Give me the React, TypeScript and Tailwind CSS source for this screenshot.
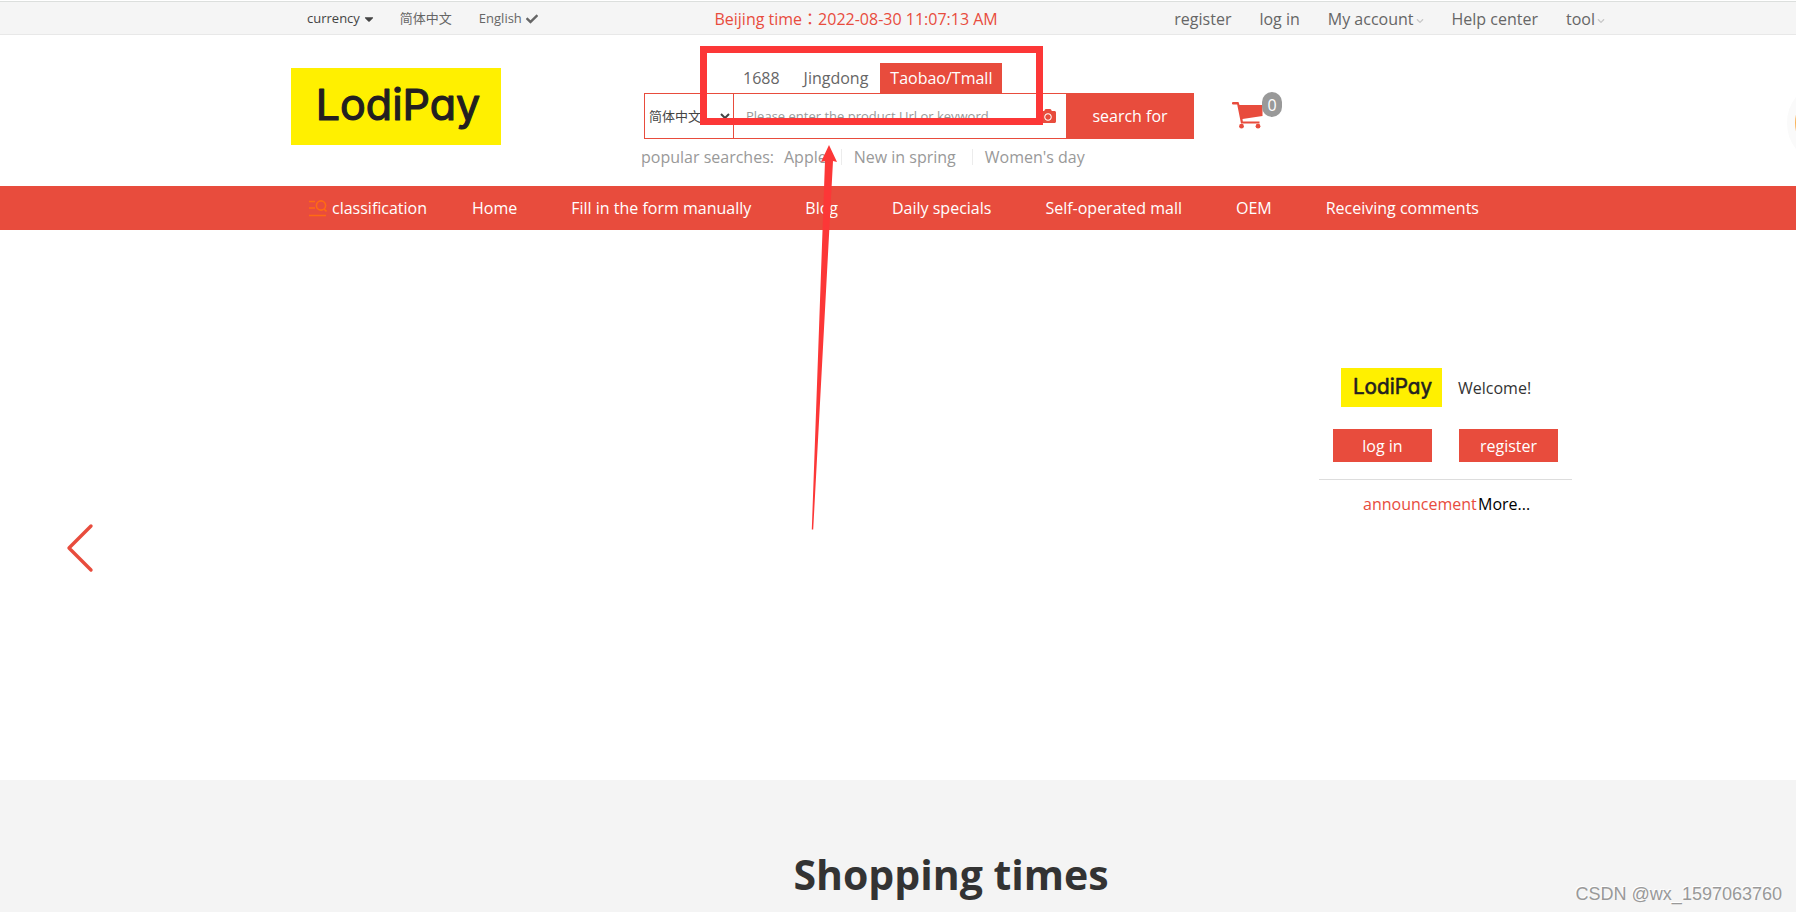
import { FaCamera, FaCaretDown, FaCheck, FaChevronDown } from 'react-icons/fa';

const accountLinks = [
  { label: 'register' },
  { label: 'log in' },
  { label: 'My account', menu: true },
  { label: 'Help center' },
  { label: 'tool', menu: true },
];

const navLinks = [
  'Home',
  'Fill in the form manually',
  'Blog',
  'Daily specials',
  'Self-operated mall',
  'OEM',
  'Receiving comments',
];

const popular = ['Apple', 'New in spring', "Women's day"];

function Logo({ className }: { className: string }) {
  return (
    <svg viewBox="0 0 210 77" preserveAspectRatio="none" className={className} role="img" aria-label="LodiPay">
      <rect width="210" height="77" fill="#fff000" />
      <text
        x="107"
        y="52"
        textAnchor="middle"
        className="font-['Inter',sans-serif] [font-feature-settings:'cv11']"
        fontSize="43"
        fill="#231f20"
        stroke="#231f20"
        strokeWidth="1.2"
        strokeLinejoin="round"
      >
        LodiPay
      </text>
    </svg>
  );
}

function CartIcon() {
  return (
    <svg viewBox="0 0 31 27" className="mt-2.5 h-[27px] w-[31px]" fill="#e84c3d">
      <path d="M1 0H6.500L7.500 3H30.500V14L10.500 17L10.800 19.500H27.500V21.500H9L5.200 2.500H1A1.200 1.200 0 0 1 1 0Z" />
      <circle cx="9.500" cy="24.200" r="2.400" />
      <circle cx="26" cy="24.200" r="2.400" />
    </svg>
  );
}

function TopBar() {
  return (
    <div className="border-t border-b border-t-[#dcdfdd] border-b-[#e8e8e8] bg-[#f5f5f5] pl-[106px]">
      <div className="mx-auto flex h-8 max-w-[1320px] items-center justify-between pt-px pr-1.5 pl-4 text-base text-[#666]">
        <div className="flex items-center pt-px text-[13px]">
          <button className="flex items-center gap-1 text-[#444]">
            currency <FaCaretDown className="h-3.5 w-2.5" />
          </button>
          <a href="#" className="ml-[26px]">简体中文</a>
          <a href="#" className="ml-[27px] flex items-center gap-1">
            English <FaCheck className="h-3 w-3" />
          </a>
        </div>
        <p className="font-['Open_Sans','Noto_Sans_CJK_TC',sans-serif] leading-6 text-[#e84c3d]">
          Beijing time：2022-08-30 11:07:13 AM
        </p>
        <div className="flex items-center gap-7">
          {accountLinks.map((link) => (
            <a key={link.label} href="#" className="flex items-center">
              {link.label}
              {link.menu && <FaChevronDown className="mt-1 ml-0.5 h-2 w-2 text-[#c8c8c8]" />}
            </a>
          ))}
        </div>
      </div>
    </div>
  );
}

function Search() {
  return (
    <div className="mt-7 ml-[140px]">
      <div className="ml-[90px] flex text-base text-[#666]">
        <button className="h-[30px] px-3">1688</button>
        <button className="h-[30px] px-3">Jingdong</button>
        <button className="h-[30px] bg-[#e84c3d] px-2.5 text-white">Taobao/Tmall</button>
      </div>
      <form className="ml-[3px] flex h-[46px] w-[550px] border border-[#e84c3d]">
        <select aria-label="Language" className="w-[89px] border-r border-[#e84c3d] bg-white text-[13px] text-[#444]">
          <option>简体中文</option>
        </select>
        <input
          aria-label="Search"
          placeholder="Please enter the product Url or keyword"
          className="min-w-0 flex-1 px-3 pt-0.5 text-[13px] placeholder:text-[#999]"
        />
        <button type="button" aria-label="Search by image" className="mr-2.5 text-[#e84c3d]">
          <FaCamera className="h-4 w-4" />
        </button>
        <button type="button" className="-my-px -mr-px w-32 bg-[#e84c3d] text-base text-white">
          search for
        </button>
      </form>
      <div className="mt-1.5 flex items-center text-base text-[#999]">
        <span className="mr-2.5">popular searches:</span>
        {popular.map((word, i) => (
          <a key={word} href="#" className={i === 0 ? 'pr-3.5' : 'border-l border-[#ececec] pr-4 pl-3 leading-4'}>
            {word}
          </a>
        ))}
      </div>
    </div>
  );
}

function NavBar() {
  return (
    <nav className="bg-[#e84c3d] pl-[106px] text-base text-white">
      <div className="mx-auto flex h-11 max-w-[1320px] items-center pl-[18px]">
        <a href="#" className="mr-[45px] flex items-center gap-[5px]">
          <svg viewBox="0 0 18 18" className="h-[18px] w-[18px]" fill="none" stroke="#ff6a13" strokeWidth="1.6">
            <path d="M0 2.5h6M0 9h6M0 16.5h17" />
            <circle cx="12" cy="6.5" r="4.6" />
            <path d="M15 10l2.500 2.500" />
          </svg>
          classification
        </a>
        <div className="flex gap-[54px]">
          {navLinks.map((label) => (
            <a key={label} href="#">{label}</a>
          ))}
        </div>
      </div>
    </nav>
  );
}

function WelcomePanel() {
  return (
    <aside className="mt-[138px] w-[253px]">
      <div className="flex items-center gap-4 pl-[22px]">
        <Logo className="h-[39px] w-[101px]" />
        <span className="text-base text-[#333]">Welcome!</span>
      </div>
      <div className="mt-[22px] flex justify-between px-3.5 text-base text-white">
        <button className="h-[33px] w-[99px] bg-[#e84c3d]">log in</button>
        <button className="h-[33px] w-[99px] bg-[#e84c3d]">register</button>
      </div>
      <div className="mt-[17px] flex items-center border-t border-[#ddd] pt-3 pl-11">
        <span className="w-[115px] text-base text-[#e84c3d]">announcement</span>
        <a href="#" className="text-base text-black">More...</a>
      </div>
    </aside>
  );
}

export default function App() {
  return (
    <div className="relative overflow-hidden bg-white pt-px font-['Open_Sans','Noto_Sans_CJK_SC',sans-serif]">
      <TopBar />

      <header className="pl-[106px]">
        <div className="mx-auto flex h-[151px] max-w-[1320px] items-start">
          <Logo className="mt-[33px] h-[77px] w-[210px]" />
          <Search />
          <a href="#" aria-label="Cart" className="mt-[57px] ml-[38px] flex items-start">
            <CartIcon />
            <span className="-ml-px flex h-[25px] w-5 items-center justify-center rounded-full bg-[#999] text-base text-white">
              0
            </span>
          </a>
        </div>
      </header>

      <NavBar />

      <main>
        <section className="flex h-[550px] items-start justify-between pr-[224px] pl-[65px]">
          <button aria-label="Previous" className="mt-[293px]">
            <svg viewBox="0 0 30 50" className="h-[50px] w-[30px]" fill="none" stroke="#e84c3d" strokeWidth="3.4" strokeLinecap="round" strokeLinejoin="round">
              <path d="M26 3L4 25L26 47" />
            </svg>
          </button>
          <WelcomePanel />
        </section>
        <section className="h-[132px] bg-[#f4f4f4] pt-16 pl-[106px]">
          <h2 className="text-center text-[41px] leading-[60px] font-bold text-[#333]">Shopping times</h2>
        </section>
      </main>

      {/* floating contact bubble, mostly past the right edge */}
      <div className="absolute top-[81px] -right-[75px] h-[84px] w-[84px] rounded-full border-8 border-[#fafafa] bg-[#f9b45c]" />

      {/* highlight frame and arrow */}
      <div className="pointer-events-none absolute top-[46px] left-[700px] h-[79px] w-[343px] border-[7px] border-[#fc3737]" />
      <svg viewBox="0 0 30 386" className="pointer-events-none absolute top-[145px] left-[810px] h-[386px] w-[30px]" fill="#fc3737">
        <path d="M19 0L27 17L23 16L3.200 384.500H1.800L15 16L11 17Z" />
      </svg>
      <div className="absolute right-3.5 bottom-1 font-['Liberation_Sans',sans-serif] text-lg text-[#999] [text-shadow:-1px_-1px_0_#fff]">
        CSDN @wx_1597063760
      </div>
    </div>
  );
}
